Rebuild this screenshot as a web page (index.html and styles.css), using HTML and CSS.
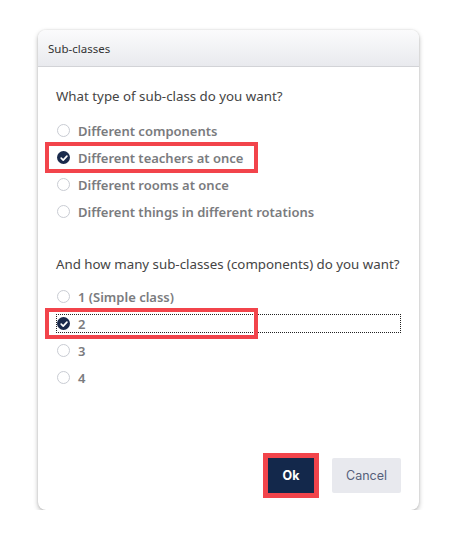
FILE: index.html
```html
<!DOCTYPE html>
<html>
<head>
<meta charset="utf-8">
<link rel="stylesheet" href="styles.css">
</head>
<body>
<div class="dialog">
  <div class="dlg-head">Sub-classes</div>
  <div class="dlg-body">
    <p class="question q1">What type of sub-class do you want?</p>
    <div class="opts opts1">
      <div class="opt"><span class="radio"></span><span class="lbl">Different components</span></div>
      <div class="opt marked"><span class="radio checked"><svg viewBox="0 0 12 12" width="12" height="12"><path d="M3.2 6.2 L5.2 8.1 L8.9 4.2" fill="none" stroke="#fff" stroke-width="1.7" stroke-linecap="round" stroke-linejoin="round"/></svg></span><span class="lbl">Different teachers at once</span></div>
      <div class="opt"><span class="radio"></span><span class="lbl">Different rooms at once</span></div>
      <div class="opt"><span class="radio"></span><span class="lbl">Different things in different rotations</span></div>
    </div>
    <p class="question q2">And how many sub-classes (components) do you want?</p>
    <div class="opts opts2">
      <div class="opt"><span class="radio"></span><span class="lbl">1 (Simple class)</span></div>
      <div class="opt marked focus"><span class="radio checked"><svg viewBox="0 0 12 12" width="12" height="12"><path d="M3.2 6.2 L5.2 8.1 L8.9 4.2" fill="none" stroke="#fff" stroke-width="1.7" stroke-linecap="round" stroke-linejoin="round"/></svg></span><span class="lbl">2</span></div>
      <div class="opt"><span class="radio"></span><span class="lbl">3</span></div>
      <div class="opt"><span class="radio"></span><span class="lbl">4</span></div>
    </div>
    <div class="dlg-foot">
      <button class="btn btn-ok">Ok</button>
      <button class="btn btn-cancel">Cancel</button>
    </div>
  </div>
</div>
</body>
</html>
```
FILE: styles.css
```css
html, body {
  margin: 0;
  padding: 0;
  background: #ffffff;
}
body {
  font-family: "Noto Sans", "Open Sans", sans-serif;
  padding: 30px 0 0 38px;
}
.dialog {
  width: 381px;
  height: 480px;
  border-radius: 8px;
  background: #fff;
  box-shadow: 0 2px 5px rgba(0,0,0,0.28), 0 0 2px rgba(0,0,0,0.12);
  display: flex;
  flex-direction: column;
}
.dlg-head {
  height: 36px;
  border-bottom: 1px solid #d2d3d7;
  border-radius: 8px 8px 0 0;
  background: linear-gradient(#fbfbfc, #e9eaee);
  font-size: 11.5px;
  color: #333;
  display: flex;
  align-items: center;
  padding-left: 10px;
}
.dlg-body {
  flex: 1;
  display: flex;
  flex-direction: column;
  padding: 0 18px 17px 18px;
}
.question {
  margin: 0;
  font-size: 13.3px;
  color: #444;
  line-height: 18px;
}
.q1 { margin-top: 20px; }
.q2 { margin-top: 30px; }
.opts {
  display: flex;
  flex-direction: column;
}
.opts1 { margin-top: 12px; }
.opts2 { margin-top: 10px; }
.opt {
  position: relative;
  height: 27px;
  display: flex;
  align-items: center;
}
.opt.focus::before {
  content: "";
  position: absolute;
  left: 0;
  right: 0;
  top: 4px;
  height: 17px;
  border: 1px dotted #222;
}
.opt.marked::after {
  content: "";
  position: absolute;
  left: -11px;
  top: -2px;
  width: 205px;
  height: 23px;
  border: 4px solid #f2444b;
}
.radio {
  width: 11px;
  height: 11px;
  border: 1px solid #c9ccd3;
  border-radius: 50%;
  margin-left: 1px;
  margin-right: 8px;
  flex: none;
  display: flex;
  align-items: center;
  justify-content: center;
  background: #fff;
}
.radio.checked {
  width: 13px;
  height: 13px;
  border: none;
  background: #1a2a4c;
}
.radio.checked svg { display: block; }
.lbl {
  font-size: 13px;
  font-weight: 600;
  color: #7a7b7e;
}
.dlg-foot {
  margin-top: auto;
  display: flex;
  justify-content: flex-end;
  gap: 18px;
}
.btn {
  height: 35px;
  border: none;
  border-radius: 2px;
  font-family: "Inter", "Roboto", sans-serif;
  font-size: 12.5px;
  padding: 0;
}
.btn-ok {
  width: 46px;
  background: #13284b;
  color: #fff;
  font-weight: 700;
  outline: 5px solid #f2444b;
  border-radius: 0;
}
.btn-cancel {
  width: 69px;
  background: #e8e9ee;
  color: #56607a;
}
```
